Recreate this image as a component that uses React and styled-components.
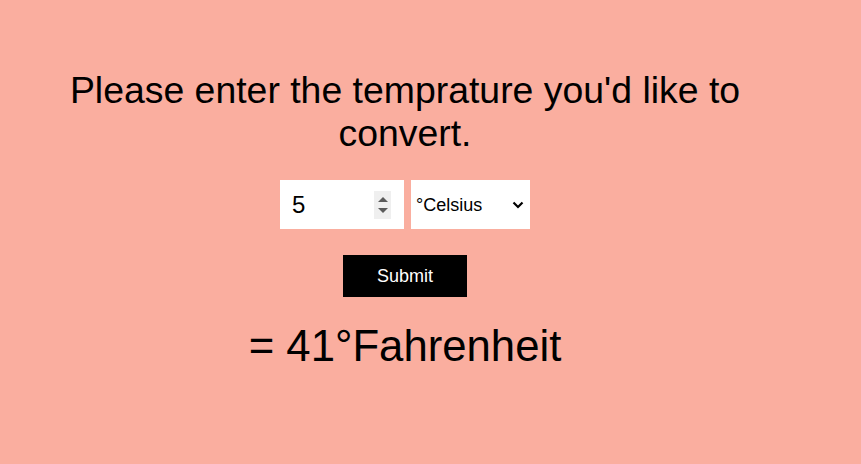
import React, { useState } from "react";
import styled, { createGlobalStyle } from "styled-components";

const GlobalStyle = createGlobalStyle`
  html, body {
    margin: 0;
    background: #faae9f;
    font-family: "Liberation Sans", Arial, sans-serif;
  }
`;

const chevron =
  "data:image/svg+xml,%3Csvg xmlns='http://www.w3.org/2000/svg' width='12' height='8' viewBox='0 0 12 8'%3E%3Cpath d='M1.5 1.5 L6 6 L10.5 1.5' fill='none' stroke='%23000' stroke-width='2.2'/%3E%3C/svg%3E";

const Page = styled.div`
  width: 794px;
  margin-left: 8px;
  padding-top: 69px;
  display: flex;
  flex-direction: column;
  align-items: center;
  text-align: center;
  color: #000;
`;

const Heading = styled.h1`
  margin: 0;
  font-size: 37.4px;
  font-weight: normal;
`;

const Form = styled.form`
  margin-top: 25px;
  display: flex;
  flex-direction: column;
  align-items: center;
`;

const Row = styled.div`
  display: flex;
  gap: 7px;
`;

const NumberBox = styled.div`
  width: 124px;
  height: 49px;
  box-sizing: border-box;
  padding: 0 13px 0 12px;
  display: flex;
  align-items: center;
  background: #fff;
`;

const NumberInput = styled.input`
  flex: 1;
  min-width: 0;
  border: none;
  outline: none;
  background: transparent;
  padding: 0;
  font-family: inherit;
  font-size: 24px;
  color: #000;
  -moz-appearance: textfield;

  &::-webkit-inner-spin-button,
  &::-webkit-outer-spin-button {
    -webkit-appearance: none;
    margin: 0;
  }
`;

// spin arrows, always visible like in the shot
const Spinner = styled.div`
  width: 17px;
  height: 28px;
  background: #efefef;
  display: flex;
  flex-direction: column;
  align-items: center;
  justify-content: center;
  gap: 6px;
`;

const Arrow = styled.span`
  width: 0;
  height: 0;
  border-left: 5px solid transparent;
  border-right: 5px solid transparent;
  ${({ down }) =>
    down ? "border-top: 5px solid #5b5b5b;" : "border-bottom: 5px solid #5b5b5b;"}
`;

const Select = styled.select`
  width: 119px;
  height: 49px;
  border: none;
  outline: none;
  appearance: none;
  -webkit-appearance: none;
  background: #fff url("${chevron}") no-repeat right 6px center / 12px 8px;
  padding: 0 20px 0 5px;
  font-family: inherit;
  font-size: 18px;
  color: #000;
`;

const SubmitButton = styled.button`
  margin-top: 26px;
  width: 124px;
  height: 42px;
  border: none;
  background: #000;
  color: #fff;
  font-family: inherit;
  font-size: 18px;
  cursor: pointer;
`;

const Result = styled.h2`
  margin: 24px 0 0;
  font-size: 43.7px;
  font-weight: normal;
`;

const App = () => {
  const [value, setValue] = useState("5");
  const [unit, setUnit] = useState("celsius");
  const [result, setResult] = useState("41°Fahrenheit");

  const handleSubmit = (e) => {
    e.preventDefault();
    const n = parseFloat(value);
    if (isNaN(n)) return;
    if (unit === "celsius") setResult(`${Math.round((n * 9) / 5 + 32)}°Fahrenheit`);
    else setResult(`${Math.round(((n - 32) * 5) / 9)}°Celsius`);
  };

  return (
    <>
      <GlobalStyle />
      <Page>
        <Heading>Please enter the temprature you'd like to convert.</Heading>
        <Form onSubmit={handleSubmit}>
          <Row>
            <NumberBox>
              <NumberInput type="number" value={value} onChange={(e) => setValue(e.target.value)} />
              <Spinner>
                <Arrow />
                <Arrow down />
              </Spinner>
            </NumberBox>
            <Select value={unit} onChange={(e) => setUnit(e.target.value)}>
              <option value="celsius">°Celsius</option>
              <option value="fahrenheit">°Fahrenheit</option>
            </Select>
          </Row>
          <SubmitButton type="submit">Submit</SubmitButton>
        </Form>
        <Result>= {result}</Result>
      </Page>
    </>
  );
};

export default App;
